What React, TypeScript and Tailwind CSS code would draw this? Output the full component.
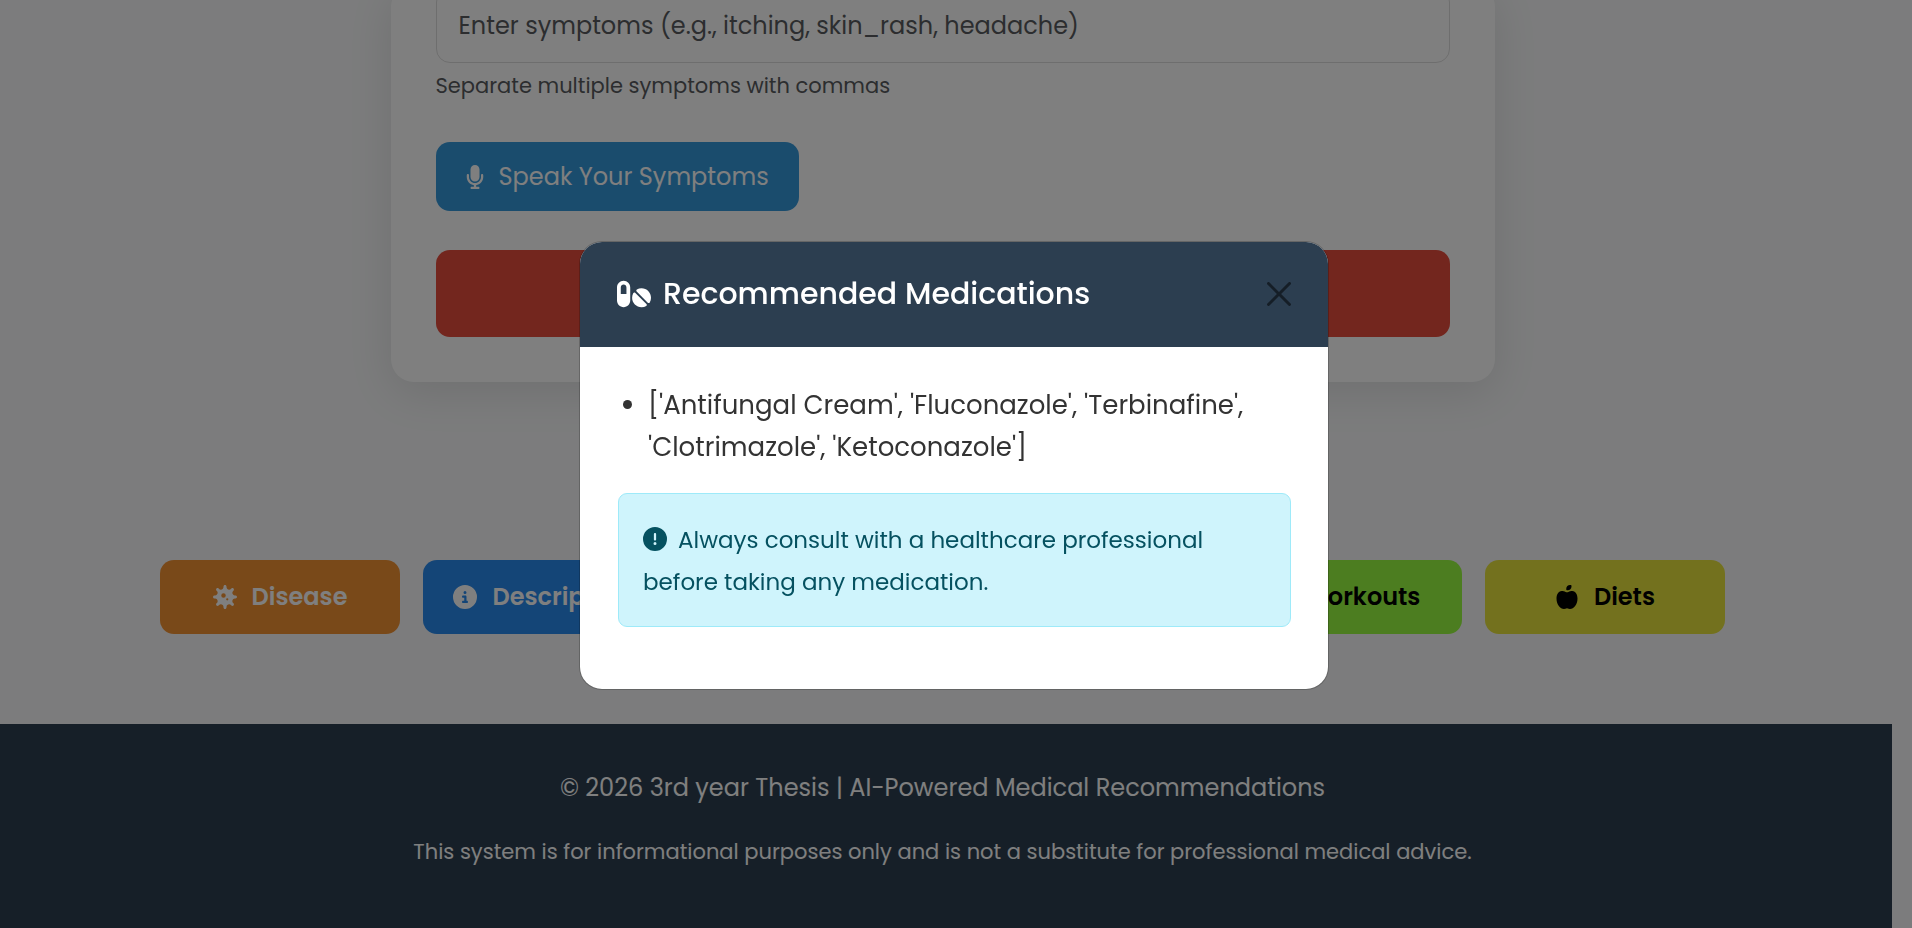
import type { ReactNode } from "react";
import {
  FaAppleWhole,
  FaCircleExclamation,
  FaCircleInfo,
  FaDumbbell,
  FaMicrophone,
  FaPills,
  FaShieldHalved,
  FaVirus,
} from "react-icons/fa6";

type Category = { label: string; icon: ReactNode; style: string };

const categories: Category[] = [
  { label: "Disease", icon: <FaVirus />, style: "w-60 bg-[#f39233] text-white" },
  { label: "Description", icon: <FaCircleInfo />, style: "w-60 bg-[#288aee] text-white" },
  { label: "Precaution", icon: <FaShieldHalved />, style: "w-60 bg-[#e74c3c] text-white" },
  { label: "Medications", icon: <FaPills />, style: "w-63 bg-[#9b59b6] text-white" },
  { label: "Workouts", icon: <FaDumbbell />, style: "w-60 bg-[#98fa40] text-black" },
  { label: "Diets", icon: <FaAppleWhole />, style: "w-60 bg-[#e6e23c] text-black" },
];

function SymptomForm() {
  return (
    <form
      className="mx-auto -mt-4 max-w-[1104px] rounded-[23px] bg-white px-[45px] pt-[4px] pb-[45px] shadow-[0_11px_45px_rgba(0,0,0,0.1)]"
      onSubmit={(e) => e.preventDefault()}
    >
      <input
        id="symptoms"
        type="text"
        aria-label="Symptoms"
        aria-describedby="symptoms-help"
        placeholder="Enter symptoms (e.g., itching, skin_rash, headache)"
        className="block h-[75px] w-full rounded-[14px] border border-[#dddddd] bg-white px-[22px] text-[24px] text-[#212529] placeholder:text-[#585b5e] placeholder:opacity-100"
      />
      <p id="symptoms-help" className="mt-[6px] text-[21px] leading-[34px] text-[#585b5e]">
        Separate multiple symptoms with commas
      </p>
      <button
        type="button"
        className="mt-[39px] flex h-[69px] items-center gap-[15px] rounded-[14px] bg-[#3498db] px-[30px] text-[24px] text-white"
      >
        <FaMicrophone className="h-6 w-[18px]" />
        Speak Your Symptoms
      </button>
      <button
        type="submit"
        aria-label="Get recommendations"
        className="mt-[39px] block h-[87px] w-full rounded-[14px] bg-[#e74c3c]"
      />
    </form>
  );
}

function MedicationDialog() {
  return (
    <div className="fixed inset-0 flex items-center justify-center bg-black/50 pt-[2px] pr-[4px]">
      <section
        role="dialog"
        aria-modal="true"
        aria-labelledby="dialog-title"
        className="w-[750px] rounded-[23px] border border-black/20 bg-white bg-clip-padding"
      >
        <header className="flex h-[105px] items-center justify-between rounded-t-[22px] bg-[#2c3e50] px-[37px] text-white">
          <h2 id="dialog-title" className="flex items-center gap-3 text-[30px] leading-[42px] font-medium">
            <FaPills className="size-[34px]" />
            Recommended Medications
          </h2>
          <button type="button" aria-label="Close" className="text-black opacity-50">
            <svg viewBox="0 0 16 16" fill="currentColor" className="size-6">
              <path d="M.293.293a1 1 0 0 1 1.414 0L8 6.586 14.293.293a1 1 0 1 1 1.414 1.414L9.414 8l6.293 6.293a1 1 0 0 1-1.414 1.414L8 9.414l-6.293 6.293a1 1 0 0 1-1.414-1.414L6.586 8 .293 1.707a1 1 0 0 1 0-1.414z" />
            </svg>
          </button>
        </header>
        <div className="pt-[37px] pr-[37px] pb-[62px] pl-[38px]">
          <ul className="list-disc pl-[30px] text-[26px] leading-[42px] text-[#333333]">
            <li>['Antifungal Cream', 'Fluconazole', 'Terbinafine', 'Clotrimazole', 'Ketoconazole']</li>
          </ul>
          <p className="mt-[25px] rounded-[9px] border border-[#9eeaf9] bg-[#cff4fc] px-6 pt-[25px] pb-[23px] text-[23px] leading-[42px] text-[#055160]">
            <FaCircleExclamation className="mr-[11px] -mt-1 inline size-6" />
            Always consult with a healthcare professional before taking any medication.
          </p>
        </div>
      </section>
    </div>
  );
}

export default function App() {
  return (
    <div className="flex min-h-screen flex-col overflow-hidden bg-[#f8f9fa] pr-5 font-['Poppins','Inter',sans-serif]">
      <main className="pr-[7px]">
        <SymptomForm />
        <nav aria-label="Results" className="mt-[178px] flex justify-between px-40">
          {categories.map(({ label, icon, style }) => (
            <button
              key={label}
              type="button"
              className={`flex h-[74px] items-center justify-center gap-[15px] rounded-[14px] text-[24px] font-semibold ${style}`}
            >
              {icon}
              {label}
            </button>
          ))}
        </nav>
      </main>
      <footer className="mt-[90px] flex-1 bg-[#2c3e50] pt-[43px] pr-[7px] text-center text-white">
        <p className="text-[24px] leading-[42px]">© 2026 3rd year Thesis | AI-Powered Medical Recommendations</p>
        <p className="mt-[25px] text-[21px] leading-[36px]">
          This system is for informational purposes only and is not a substitute for professional medical advice.
        </p>
      </footer>
      <MedicationDialog />
    </div>
  );
}
